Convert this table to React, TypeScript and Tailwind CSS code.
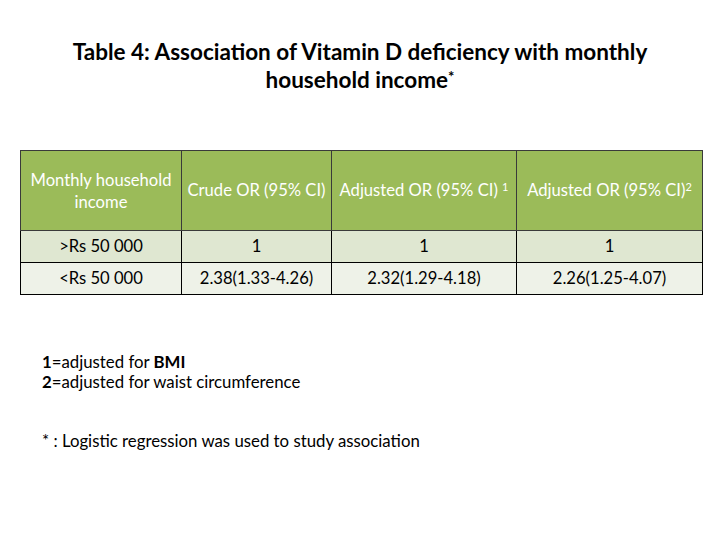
import React from "react"

const rows = [
  { income: ">Rs 50 000", crude: "1", adj1: "1", adj2: "1", bg: "bg-[#dfe7d1]" },
  { income: "<Rs 50 000", crude: "2.38(1.33-4.26)", adj1: "2.32(1.29-4.18)", adj2: "2.26(1.25-4.07)", bg: "bg-[#eef2e8]" },
]

export default function App() {
  return (
    <div className="w-[720px] h-[540px] bg-white text-black font-['Lato','Liberation_Sans',sans-serif]">
      {/* Titulo */}
      <h1 className="pt-[38px] text-center text-[22.5px] leading-[28px] font-bold">
        Table 4: Association of Vitamin D deficiency with monthly
        <br />
        household income<sup className="text-[15px] relative -top-[6px]">*</sup>
      </h1>

      <div className="mt-[56px] pl-[20px]">
        <table className="border-collapse table-fixed w-[682px] text-[16.6px]">
          <colgroup>
            <col className="w-[161px]" />
            <col className="w-[150px]" />
            <col className="w-[185px]" />
            <col className="w-[186px]" />
          </colgroup>
          <thead>
            <tr className="h-[80px] bg-[#9bbb59] text-white">
              <th className="border border-[#3a3a3a] font-normal leading-[22px] px-0">
                Monthly household
                <br />
                income
              </th>
              <th className="border border-[#3a3a3a] font-normal px-0">Crude OR (95% CI)</th>
              <th className="border border-[#3a3a3a] font-normal px-0">
                Adjusted OR (95% CI) <sup className="text-[11px]">1</sup>
              </th>
              <th className="border border-[#3a3a3a] font-normal px-0">
                Adjusted OR (95% CI)<sup className="text-[11px]">2</sup>
              </th>
            </tr>
          </thead>
          <tbody>
            {rows.map((r) => (
              <tr key={r.income} className={`h-[32px] ${r.bg}`}>
                <td className="border border-black text-center">{r.income}</td>
                <td className="border border-black text-center">{r.crude}</td>
                <td className="border border-black text-center">{r.adj1}</td>
                <td className="border border-black text-center">{r.adj2}</td>
              </tr>
            ))}
          </tbody>
        </table>
      </div>

      {/* Notas */}
      <div className="pl-[42px] mt-[57px] text-[16.8px] leading-[20px]">
        <p>
          <span className="font-bold">1</span>=adjusted for <span className="font-bold">BMI</span>
        </p>
        <p>
          <span className="font-bold">2</span>=adjusted for waist circumference
        </p>
        <p className="mt-[39px]">* : Logistic regression was used to study association</p>
      </div>
    </div>
  )
}
